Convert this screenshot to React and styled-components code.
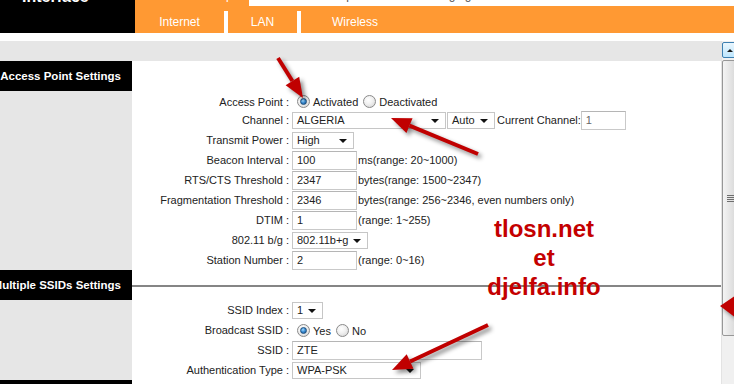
import React from "react";
import styled, { createGlobalStyle } from "styled-components";

const ORANGE = "#ff9933";
const PANEL = "#e6e6e6";

const GlobalStyle = createGlobalStyle`
  html, body {
    margin: 0;
    padding: 0;
    background: #fff;
    overflow: hidden;
  }
  body {
    font-family: "Liberation Sans", Arial, sans-serif;
    font-size: 11px;
    color: #222;
  }
`;

const Page = styled.div`
  position: relative;
  width: 734px;
  height: 384px;
  overflow: hidden;
  background: #fff;
`;

const TopBar = styled.div`
  display: flex;
  height: 33px;
`;

const Brand = styled.div`
  width: 135px;
  flex-shrink: 0;
  background: #000;
  color: #fff;
  font-weight: bold;
  font-size: 16px;
  line-height: 16px;
  padding-left: 22px;
  box-sizing: border-box;
  overflow: hidden;

  span {
    display: block;
    margin-top: -11px;
  }
`;

const NavArea = styled.div`
  flex: 1;
  display: flex;
  flex-direction: column;
`;

const SubNav = styled.div`
  height: 6px;
  display: flex;
  overflow: hidden;
  background: #fff;
`;

const SubItem = styled.div`
  width: ${(p) => p.$w}px;
  flex-shrink: 0;
  height: 6px;
  overflow: hidden;
  background: ${(p) => (p.$active ? ORANGE : "#fff")};
  color: ${(p) => (p.$active ? "#fff" : "#555")};
  font-size: 12px;
  line-height: 12px;
  text-align: center;

  span {
    display: block;
    margin-top: -11px;
  }
`;

const TabRow = styled.div`
  flex: 1;
  display: flex;
  align-items: flex-end;
  background: ${ORANGE};
`;

const Tab = styled.div`
  width: ${(p) => p.$w}px;
  height: 22px;
  display: flex;
  align-items: center;
  justify-content: center;
  color: #fff;
  font-size: 12px;
`;

const TabDivider = styled.div`
  width: 4px;
  height: 22px;
  background: #fff;
`;

const Spacer = styled.div`
  height: 8px;
`;

const Body = styled.div`
  display: flex;
`;

const Main = styled.div`
  width: 721px;
  flex-shrink: 0;
`;

const GrayBand = styled.div`
  height: 20px;
  background: ${PANEL};
`;

const Section = styled.div`
  display: grid;
  grid-template-columns: 132px 1fr;
`;

const Side = styled.div`
  background: ${PANEL};
`;

const SideTitle = styled.div`
  height: 30px;
  background: #000;
  color: #fff;
  font-weight: bold;
  font-size: 11.5px;
  line-height: 30px;
  text-align: right;
  padding-right: 11px;
  white-space: nowrap;
  overflow: hidden;
  direction: rtl;

  span {
    direction: ltr;
    unicode-bidi: isolate;
  }
`;

const Form = styled.div`
  display: flex;
  flex-direction: column;
  padding-top: ${(p) => p.$top || 0}px;
`;

const Divider = styled.div`
  height: 30px;
  display: flex;
  align-items: center;

  &::before {
    content: "";
    flex: 1;
    height: 2px;
    margin-top: 1px;
    background: #858585;
  }
`;

const Row = styled.div`
  display: grid;
  grid-template-columns: 160px 1fr;
  height: ${(p) => p.$h || 20}px;
  align-items: center;
`;

const Label = styled.div`
  text-align: right;
  padding-right: 3px;
  white-space: nowrap;
  color: #222;
`;

const Field = styled.div`
  display: flex;
  align-items: center;
  white-space: nowrap;
`;

const TextBox = styled.div`
  width: ${(p) => p.$w}px;
  height: 19px;
  box-sizing: border-box;
  border: 1px solid #c9c9c9;
  border-top-color: #b5b5b5;
  padding-left: 4px;
  line-height: 17px;
  color: ${(p) => (p.$muted ? "#666" : "#222")};
  background: #fff;
`;

const Select = styled.div`
  position: relative;
  width: ${(p) => p.$w}px;
  height: 17px;
  box-sizing: border-box;
  border: 1px solid #c6c6c6;
  padding-left: 4px;
  line-height: 15px;
  background: #fff;
  margin-right: ${(p) => p.$mr || 0}px;

  &::after {
    content: "";
    position: absolute;
    right: 6px;
    top: 6px;
    border-left: 4px solid transparent;
    border-right: 4px solid transparent;
    border-top: 4px solid #111;
  }
`;

const Hint = styled.span`
  margin-left: ${(p) => p.$ml ?? 1}px;
  margin-right: ${(p) => p.$mr || 0}px;
  color: #222;
`;

const Radio = styled.span`
  position: relative;
  width: 13px;
  height: 13px;
  box-sizing: border-box;
  border-radius: 50%;
  border: 1px solid #8a8a8a;
  background: radial-gradient(circle at 40% 35%, #ffffff 0%, #f0f0f0 45%, #cfcfcf 100%);
  margin: 0 3px 0 5px;
  flex-shrink: 0;

  &::after {
    content: "";
    display: ${(p) => (p.$checked ? "block" : "none")};
    position: absolute;
    left: 2px;
    top: 2px;
    width: 7px;
    height: 7px;
    box-sizing: border-box;
    border-radius: 50%;
    border: 1px solid #1f4f7c;
    background: radial-gradient(circle at 40% 35%, #a8ddff 0%, #3c8fd6 45%, #12508e 100%);
  }
`;

const RadioText = styled.span`
  margin-top: ${(p) => p.$dy || 0}px;
`;

const ScrollBar = styled.div`
  width: 17px;
  flex-shrink: 0;
  height: 343px;
  display: flex;
  flex-direction: column;
  background: #f0f0f0;
  border-left: 1px solid #e3e3e3;
  box-sizing: border-box;
`;

const ScrollButton = styled.div`
  height: 16px;
  margin: 1px 0 0;
  box-sizing: border-box;
  border: 1px solid #3c7fb1;
  border-radius: 2px;
  background: linear-gradient(#eaf6fd, #bee6fd);
  display: flex;
  align-items: center;
  justify-content: center;

  &::before {
    content: "";
    border-left: 3px solid transparent;
    border-right: 3px solid transparent;
    border-bottom: 3px solid #1a1a1a;
  }
`;

const Thumb = styled.div`
  height: 276px;
  margin-top: 2px;
  box-sizing: border-box;
  border: 1px solid #979797;
  border-radius: 2px;
  background: linear-gradient(90deg, #f4f4f4, #e2e2e2 60%, #d6d6d6);
  display: flex;
  align-items: center;
  justify-content: center;
`;

const Grip = styled.div`
  width: 7px;
  height: 7px;
  background: repeating-linear-gradient(
    #6e6e6e 0,
    #6e6e6e 1px,
    transparent 1px,
    transparent 2px
  );
`;

const Overlay = styled.svg`
  position: absolute;
  left: 0;
  top: 0;
  pointer-events: none;
  filter: drop-shadow(3px 3px 2px rgba(0, 0, 0, 0.45));
`;

const Watermark = styled.div`
  position: absolute;
  left: 444px;
  top: 214px;
  width: 200px;
  text-align: center;
  color: #c40000;
  font-family: "Liberation Sans", Arial, sans-serif;
  font-weight: bold;
  font-size: 24px;
  line-height: 29px;
`;

function arrowHead(tail, tip, len = 20, half = 8) {
  const dx = tip[0] - tail[0];
  const dy = tip[1] - tail[1];
  const d = Math.hypot(dx, dy);
  const ux = dx / d;
  const uy = dy / d;
  const bx = tip[0] - ux * len;
  const by = tip[1] - uy * len;
  return {
    base: [bx, by],
    points: `${tip[0]},${tip[1]} ${bx - uy * half},${by + ux * half} ${bx + uy * half},${by - ux * half}`,
  };
}

function Arrow({ from, to }) {
  const head = arrowHead(from, to);
  return (
    <g fill="#c00000" stroke="#c00000">
      <line x1={from[0]} y1={from[1]} x2={head.base[0]} y2={head.base[1]} strokeWidth="4" />
      <polygon points={head.points} stroke="none" />
    </g>
  );
}

const arrows = [
  { from: [278, 58], to: [303, 98] },
  { from: [478, 154], to: [391, 118] },
  { from: [488, 325], to: [392, 370] },
];

export default function App() {
  return (
    <>
      <GlobalStyle />
      <Page>
        <TopBar>
          <Brand>
            <span>Interface</span>
          </Brand>
          <NavArea>
            <SubNav>
              <SubItem $w={114} $active>
                <span>Interface Setup</span>
              </SubItem>
              <SubItem $w={120}>
                <span>Advanced Setup</span>
              </SubItem>
              <SubItem $w={110}>
                <span>Access Managing</span>
              </SubItem>
            </SubNav>
            <TabRow>
              <Tab $w={89}>Internet</Tab>
              <TabDivider />
              <Tab $w={69}>LAN</Tab>
              <TabDivider />
              <Tab $w={108}>Wireless</Tab>
            </TabRow>
          </NavArea>
        </TopBar>
        <Spacer />
        <Body>
          <Main>
            <GrayBand />

            <Section>
              <Side>
                <SideTitle>
                  <span>Access Point Settings</span>
                </SideTitle>
              </Side>
              <Form $top={32}>
                <Row $h={17}>
                  <Label>Access Point :</Label>
                  <Field>
                    <Radio $checked />
                    <RadioText>Activated</RadioText>
                    <Radio />
                    <RadioText>Deactivated</RadioText>
                  </Field>
                </Row>
                <Row>
                  <Label>Channel :</Label>
                  <Field>
                    <Select $w={154} $mr={1}>ALGERIA</Select>
                    <Select $w={48}>Auto</Select>
                    <Hint $ml={2} $mr={0}>Current Channel:</Hint>
                    <TextBox $w={45} $muted>1</TextBox>
                  </Field>
                </Row>
                <Row>
                  <Label>Transmit Power :</Label>
                  <Field>
                    <Select $w={62}>High</Select>
                  </Field>
                </Row>
                <Row>
                  <Label>Beacon Interval :</Label>
                  <Field>
                    <TextBox $w={65}>100</TextBox>
                    <Hint>ms(range: 20~1000)</Hint>
                  </Field>
                </Row>
                <Row>
                  <Label>RTS/CTS Threshold :</Label>
                  <Field>
                    <TextBox $w={65}>2347</TextBox>
                    <Hint>bytes(range: 1500~2347)</Hint>
                  </Field>
                </Row>
                <Row>
                  <Label>Fragmentation Threshold :</Label>
                  <Field>
                    <TextBox $w={65}>2346</TextBox>
                    <Hint>bytes(range: 256~2346, even numbers only)</Hint>
                  </Field>
                </Row>
                <Row>
                  <Label>DTIM :</Label>
                  <Field>
                    <TextBox $w={65}>1</TextBox>
                    <Hint>(range: 1~255)</Hint>
                  </Field>
                </Row>
                <Row>
                  <Label>802.11 b/g :</Label>
                  <Field>
                    <Select $w={76}>802.11b+g</Select>
                  </Field>
                </Row>
                <Row>
                  <Label>Station Number :</Label>
                  <Field>
                    <TextBox $w={65}>2</TextBox>
                    <Hint>(range: 0~16)</Hint>
                  </Field>
                </Row>
              </Form>
            </Section>

            <Section>
              <Side>
                <SideTitle>
                  <span>Multiple SSIDs Settings</span>
                </SideTitle>
              </Side>
              <Form>
                <Divider />
                <Row>
                  <Label>SSID Index :</Label>
                  <Field>
                    <Select $w={31}>1</Select>
                  </Field>
                </Row>
                <Row>
                  <Label>Broadcast SSID :</Label>
                  <Field>
                    <Radio $checked />
                    <RadioText $dy={2}>Yes</RadioText>
                    <Radio />
                    <RadioText $dy={2}>No</RadioText>
                  </Field>
                </Row>
                <Row>
                  <Label>SSID :</Label>
                  <Field>
                    <TextBox $w={190}>ZTE</TextBox>
                  </Field>
                </Row>
                <Row>
                  <Label>Authentication Type :</Label>
                  <Field>
                    <Select $w={129}>WPA-PSK</Select>
                  </Field>
                </Row>
              </Form>
            </Section>

            <Section>
              <Side>
                <SideTitle>
                  <span>WPA-PSK</span>
                </SideTitle>
              </Side>
              <Form />
            </Section>
          </Main>
          <ScrollBar>
            <ScrollButton />
            <Thumb>
              <Grip />
            </Thumb>
          </ScrollBar>
        </Body>

        <Overlay width="734" height="384" viewBox="0 0 734 384">
          {arrows.map((a, i) => (
            <Arrow key={i} from={a.from} to={a.to} />
          ))}
          <polygon points="720,306 736,295 736,318" fill="#c00000" />
        </Overlay>

        <Watermark>
          tlosn.net
          <br />
          et
          <br />
          djelfa.info
        </Watermark>
      </Page>
    </>
  );
}
